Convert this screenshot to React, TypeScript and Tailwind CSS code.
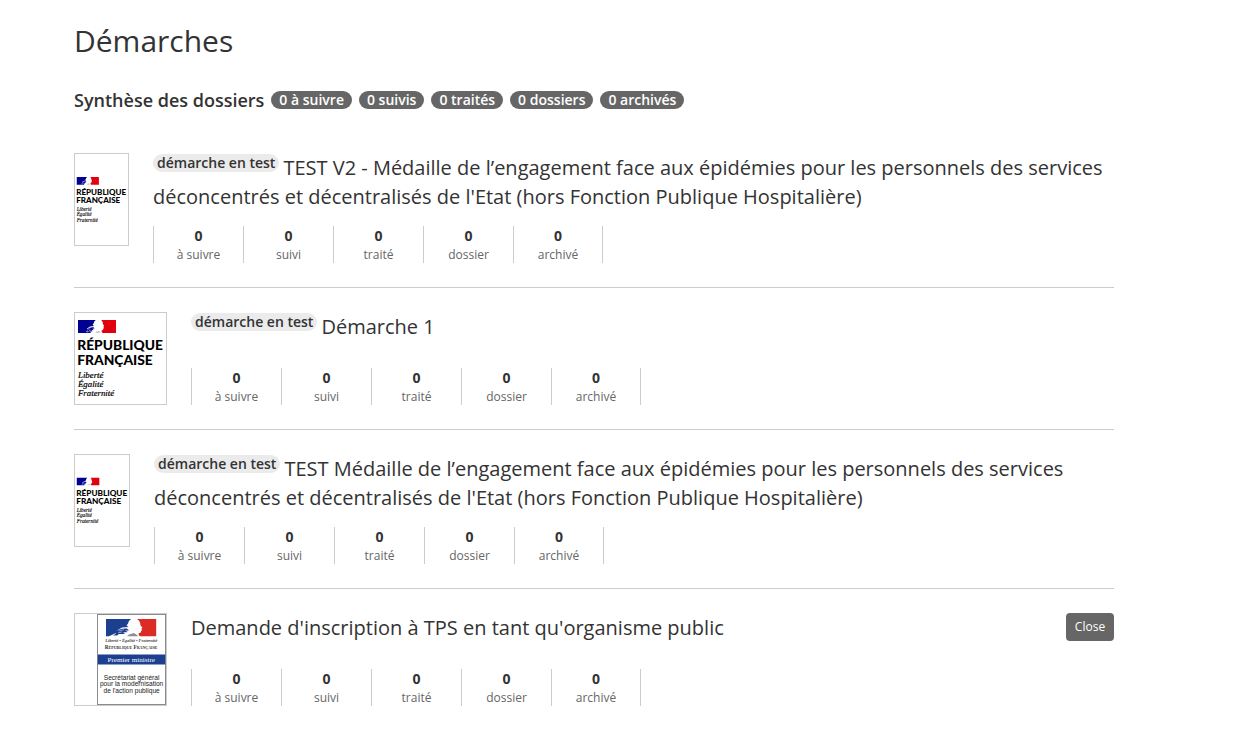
type LogoKind = 'republique' | 'ministere';

interface Procedure {
  title: string;
  test: boolean;
  logo: LogoKind;
  logoWidth: string;
  closable?: boolean;
}

const summary = ['0 à suivre', '0 suivis', '0 traités', '0 dossiers', '0 archivés'];
const counters = ['à suivre', 'suivi', 'traité', 'dossier', 'archivé'];

const procedures: Procedure[] = [
  {
    title:
      "TEST V2 - Médaille de l’engagement face aux épidémies pour les personnels des services déconcentrés et décentralisés de l'Etat (hors Fonction Publique Hospitalière)",
    test: true,
    logo: 'republique',
    logoWidth: 'w-[55px]',
  },
  { title: 'Démarche 1', test: true, logo: 'republique', logoWidth: 'w-[93px]' },
  {
    title:
      "TEST Médaille de l’engagement face aux épidémies pour les personnels des services déconcentrés et décentralisés de l'Etat (hors Fonction Publique Hospitalière)",
    test: true,
    logo: 'republique',
    logoWidth: 'w-[56px]',
  },
  {
    title: "Demande d'inscription à TPS en tant qu'organisme public",
    test: false,
    logo: 'ministere',
    logoWidth: 'w-[93px]',
    closable: true,
  },
];

function RepubliqueLogo() {
  return (
    <svg viewBox="0 0 910 910" className="h-full w-full" role="img" aria-label="République Française">
      <path d="M30 70H208Q188 84 186 104L176 118L190 130L150 136L118 158L132 166L112 184L124 200H30Z" fill="#000091" />
      <path d="M262 70H410V200H276Q262 190 266 176Q284 172 282 160L290 148L282 138L292 130L280 112Q282 90 262 70Z" fill="#e1000f" />
      <path d="M124 160Q150 138 186 142L196 156L172 158L188 168L164 172L178 182L150 184L160 200H118L128 184L112 180L134 170Z" fill="#000091" />
      <path d="M128 164L150 156M140 176L160 170M126 190L144 186" stroke="#9a9ade" strokeWidth="7" fill="none" />
      <path d="M214 184L240 178L258 200H204Z" fill="#c9c9cf" />
      <g fill="#000" fontFamily="Lato, sans-serif" fontWeight="900" fontSize="138">
        <text x="22" y="374">RÉPUBLIQUE</text>
        <text x="22" y="522">FRANÇAISE</text>
      </g>
      <g fill="#000" stroke="#000" strokeWidth="2" fontFamily="'Liberation Serif', serif" fontStyle="italic" fontSize="88">
        <text x="30" y="646">Liberté</text>
        <text x="30" y="740">Égalité</text>
        <text x="30" y="834">Fraternité</text>
      </g>
    </svg>
  );
}

function MinistereLogo() {
  return (
    <svg viewBox="0 0 910 910" className="h-full w-full" role="img" aria-label="Premier ministre">
      <rect x="225" y="5" width="680" height="900" fill="#fff" stroke="#8b8b8b" strokeWidth="10" />
      <path d="M310 50H560Q534 66 530 96L516 116L534 130L470 136L420 166L440 172L400 196L340 222H310Z" fill="#1d3f8f" />
      <path d="M620 50H812V222H650Q630 208 636 192Q664 188 660 172L672 158L662 148L674 138L654 112Q656 74 620 50Z" fill="#dc2a24" />
      <path d="M400 186Q450 138 520 146L540 164L500 164L530 180L480 184L500 200L440 200L420 214L380 216L410 198Z" fill="#1d3f8f" />
      <path d="M440 170L490 156M430 188L470 180" stroke="#9fb0dc" strokeWidth="8" fill="none" />
      <path d="M540 206L590 190L636 222H520Z" fill="#8d8f98" />
      <g textAnchor="middle" fontFamily="'Liberation Serif', serif">
        <text x="562" y="280" fontSize="44" fontStyle="italic" fontWeight="700" fill="#444">Liberté • Égalité • Fraternité</text>
        <text x="562" y="350" fontSize="52" fontWeight="700" fill="#333" className="[font-variant:small-caps]">République Française</text>
        <rect x="228" y="405" width="674" height="100" fill="#1d3f8f" />
        <text x="562" y="477" fontSize="71" fill="#fff">Premier ministre</text>
      </g>
      <g textAnchor="middle" fontFamily="'Liberation Sans', sans-serif" fontSize="66" fill="#222">
        <text x="566" y="655">Secrétariat général</text>
        <text x="566" y="724">pour la modernisation</text>
        <text x="566" y="792">de l'action publique</text>
      </g>
    </svg>
  );
}

function ProcedureRow({ procedure }: { procedure: Procedure }) {
  return (
    <li className="flex items-start gap-6 border-b border-[#cccccc] py-6 last:border-b-0">
      <div className={`h-[93px] shrink-0 border border-[#cccccc] ${procedure.logoWidth}`}>
        {procedure.logo === 'republique' ? <RepubliqueLogo /> : <MinistereLogo />}
      </div>
      <div className="flex min-h-[93px] min-w-0 grow flex-col justify-between gap-[15px]">
        <h2 className="text-xl leading-[29px]">
          {procedure.test && (
            <span className="mr-1 inline-block rounded-full bg-[#ebebeb] px-1 align-[7px] text-sm leading-[18px] font-semibold">
              démarche en test
            </span>
          )}
          <a href="#">{procedure.title}</a>
        </h2>
        <ul className="flex">
          {counters.map((label) => (
            <li key={label} className="w-[90px] border-l border-[#cccccc] text-center last:border-r">
              <a href="#" className="block">
                <span className="block text-sm leading-5 font-bold">0</span>
                <span className="block text-xs leading-[17px] text-[#666666]">{label}</span>
              </a>
            </li>
          ))}
        </ul>
      </div>
      {procedure.closable && (
        <button type="button" className="h-7 min-w-12 shrink-0 rounded bg-[#666666] px-2 text-xs text-white">
          Close
        </button>
      )}
    </li>
  );
}

export default function App() {
  return (
    <main className="mr-8 ml-[74px] max-w-[1040px] pt-5 font-['Open_Sans',sans-serif] text-[#333333]">
      <h1 className="text-[30px] leading-[42px]">Démarches</h1>
      <section className="mt-6 flex flex-wrap items-center gap-[7px]">
        <h2 className="text-lg leading-7 font-semibold">Synthèse des dossiers</h2>
        {summary.map((label) => (
          <span key={label} className="rounded-full bg-[#666666] px-2 text-sm leading-[18px] font-semibold text-white">
            {label}
          </span>
        ))}
      </section>
      <ul className="mt-[15px]">
        {procedures.map((procedure) => (
          <ProcedureRow key={procedure.title} procedure={procedure} />
        ))}
      </ul>
    </main>
  );
}
